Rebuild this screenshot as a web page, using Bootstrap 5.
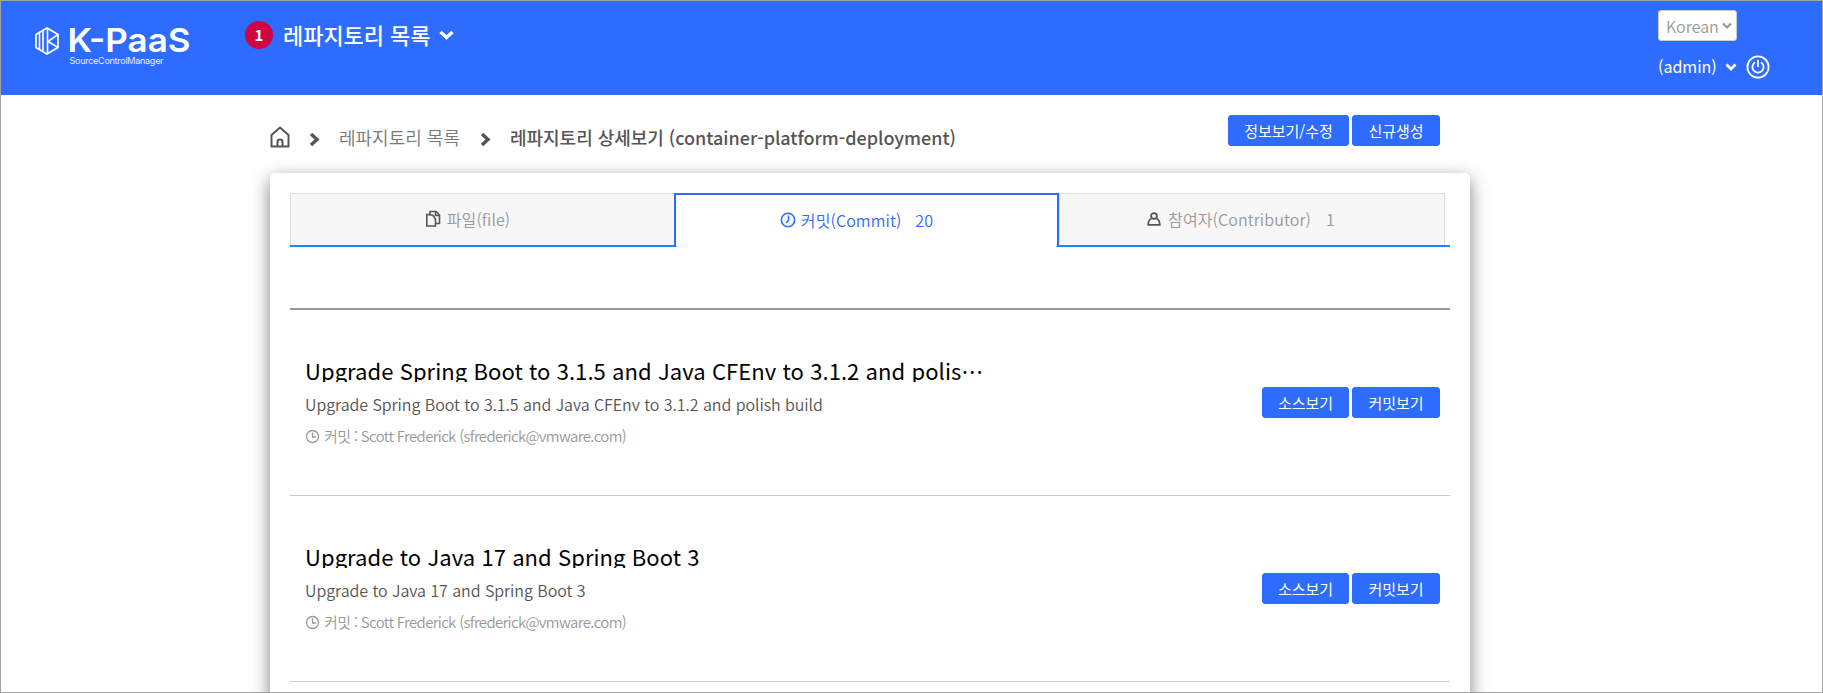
<!DOCTYPE html>
<html lang="ko">
<head>
<meta charset="utf-8">
<title>K-PaaS SourceControlManager</title>
<link href="https://cdn.jsdelivr.net/npm/bootstrap@5.3.0/dist/css/bootstrap.min.css" rel="stylesheet">
<style>
body{font-family:"Noto Sans CJK KR",sans-serif;height:693px;overflow:hidden;background:#fff;color:#555}
.frame{height:693px;border:1px solid #a3a3a3;overflow:hidden}
.topbar{height:94px;background:#2e6bff;color:#fff}
.brand-logo{margin:20px 0 0 29px;overflow:visible}
.step{width:28px;height:28px;background:#cf0440;font-size:15px;font-weight:700;line-height:27px}
.menu-area{margin:20px 0 0 50px;height:28px}
.menu-title{font-size:22px;font-weight:500;line-height:28px;margin:-2px 0 0 10px;letter-spacing:-.05px}
.user-area{margin:9px 49px 0 auto;width:115px}
.lang{width:79px;height:31px;border:1px solid #ccc;border-radius:3px;color:#999;font-size:16px;font-weight:350;padding:0 4px 0 7px}
.admin-row{height:24px;margin-top:14px;font-size:16px}
.admin-row span{margin-top:-2px}
.admin-row svg{position:relative;left:-1px}
.wrap{width:1200px;margin-left:269px}
.crumbs{height:78px}
.crumb-row{font-size:18px;line-height:26px;padding-top:29px;color:#555}
.crumb-row svg{flex:none}
.crumb-row .here{font-weight:500;margin-left:18px;letter-spacing:-.02px}
.crumb-row .parent{margin-left:18px;color:#777;font-weight:350}
.actions{padding:20px 30px 0 0}
.btn-blue{--bs-btn-bg:#2e6bff;--bs-btn-color:#fff;--bs-btn-border-color:#2e6bff;height:31px;padding:0;font-size:15px;line-height:28px;font-weight:400;border-radius:3px;width:88px}
.btn-blue.wide{width:121px}
.btn-blue.src{width:87px}
.panel{height:640px;border-radius:5px;background:#fff;box-shadow:0 6px 18px rgba(0,0,0,.5);padding:20px 20px 0}
.tabs{height:54px;background:linear-gradient(#1e87f7,#1e87f7) bottom/100% 2px no-repeat;padding-right:5px}
.tab{width:384px;height:52px;background:#f7f7f7;border:1px solid #ddd;border-bottom:0;border-right:0;font-size:16px;color:#999;padding:0 22px 2px 0}
.tab:last-child{width:386px;border-right:1px solid #ddd}
.tab.on{width:385px;height:54px;background:#fff;border:2px solid #2e6bff;border-bottom:0;color:#2e6bff;border-radius:0 0 3px 3px;padding-right:20px}
.tab.first{padding-right:30px}
.tab span{font-weight:350;letter-spacing:.1px}
.rule{height:63px;border-bottom:2px solid #999}
.commit{height:186px;border-bottom:1px solid #ccc;padding:48px 10px 0 15px}
.c-title{font-size:22px;line-height:24px;height:24px;overflow:hidden;color:#000;white-space:nowrap;letter-spacing:.064px}
.c-desc{font-size:16px;line-height:24px;color:#555;margin-top:10px;font-weight:350;letter-spacing:-.06px}
.c-meta{font-size:15px;line-height:22px;color:#999;margin-top:9px;font-weight:350;letter-spacing:-.64px}
</style>
</head>
<body>
<div class="frame">
<header class="topbar d-flex align-items-start">
  <svg class="brand-logo" width="165" height="52" viewBox="30 21 165 52" fill="none">
    <path d="M47 28 58 34.5V47.500L47 54 36 47.500V34.500Z" stroke="#fff" stroke-width="1.700"/>
    <path d="M39.500 33V49M43 31V51M47.500 28V54M58 34.500 48 41.500 58 47.500" stroke="#fff" stroke-width="1.600"/>
    <text x="67.500" y="52" font-family="Inter" font-weight="600" font-size="33" fill="#fff" textLength="123" lengthAdjust="spacingAndGlyphs">K-PaaS</text>
    <text x="69.500" y="63.500" font-family="Inter" font-size="9" fill="#e8efff" textLength="94">SourceControlManager</text>
  </svg>
  <div class="menu-area d-flex align-items-center">
    <span class="step rounded-circle text-center">1</span>
    <span class="menu-title">레파지토리 목록</span>
    <svg class="ms-2" width="17" height="12" viewBox="0 0 17 12"><path d="M2.500 3 8.500 8.500 14.500 3" fill="none" stroke="#fff" stroke-width="3.500"/></svg>
  </div>
  <div class="user-area">
    <div class="lang bg-white d-flex align-items-center justify-content-between"><span>Korean</span>
      <svg width="10" height="8" viewBox="0 0 10 8"><path d="M1 1.500 5 5.500 9 1.500" fill="none" stroke="#999" stroke-width="2.200"/></svg></div>
    <div class="admin-row d-flex align-items-center"><span>(admin)</span>
      <svg style="margin-left:9px" width="12" height="9" viewBox="0 0 12 9"><path d="M1.500 1.500 6 6 10.500 1.500" fill="none" stroke="#fff" stroke-width="2.800"/></svg>
      <svg style="margin-left:9px" width="24" height="24" viewBox="0 0 24 24" fill="none" stroke="#fff" stroke-width="1.800"><circle cx="12" cy="12" r="10.600"/><path d="M9 7.200A5.600 5.600 0 1 0 15 7.200M12 5V12"/></svg>
    </div>
  </div>
</header>
<main class="wrap">
  <div class="crumbs d-flex justify-content-between">
    <div class="crumb-row d-flex align-items-start">
      <svg style="margin-top:2px" width="20" height="22" viewBox="0 0 20 22" fill="none" stroke="#555" stroke-width="2"><path d="M1.500 9 10 1.500 18.500 9V20.500H1.500ZM7.500 20V15.500Q7.500 13.500 10 13.500T12.500 15.500V20"/></svg>
      <svg style="margin:8px 0 0 19px" width="12" height="15" viewBox="0 0 12 15"><path d="M2 2 8 7.500 2 13" fill="none" stroke="#555" stroke-width="3.400"/></svg>
      <span class="parent">레파지토리 목록</span>
      <svg style="margin:8px 0 0 20px" width="12" height="15" viewBox="0 0 12 15"><path d="M2 2 8 7.500 2 13" fill="none" stroke="#555" stroke-width="3.400"/></svg>
      <span class="here">레파지토리 상세보기 (container-platform-deployment)</span>
    </div>
    <div class="actions d-flex align-items-start"><button class="btn btn-blue wide">정보보기/수정</button><button class="btn btn-blue" style="margin-left:3px">신규생성</button></div>
  </div>
  <section class="panel">
    <div class="tabs d-flex">
      <div class="tab first d-flex align-items-center justify-content-center">
        <svg style="margin-right:6px" width="16" height="18" viewBox="0 0 16 18" fill="none" stroke="#555" stroke-width="1.600"><path d="M5 4.500H1.800V16H10.500V13.500M5 1.500H11L14.500 5V13.500H10.500V9L7.500 5H5ZM10.500 1.500V5.500H14.500"/></svg><span>파일(file)</span></div>
      <div class="tab on d-flex align-items-center justify-content-center">
        <svg style="margin-right:5px" width="16" height="16" viewBox="0 0 16 16" fill="none" stroke="#2e6bff" stroke-width="1.600"><circle cx="8" cy="8" r="6.700"/><path d="M8.500 3.500V8.500L6 11"/></svg><span>커밋(Commit)</span><span style="margin-left:14px">20</span></div>
      <div class="tab d-flex align-items-center justify-content-center">
        <svg style="margin-right:7px" width="14" height="14" viewBox="0 0 14 14" fill="none" stroke="#555" stroke-width="1.800"><circle cx="7" cy="4" r="2.900"/><path d="M4.500 6.500Q1.200 8 1.200 12.800H12.800Q12.800 8 9.500 6.500"/></svg><span>참여자(Contributor)</span><span style="margin-left:15px">1</span></div>
    </div>
    <div class="rule"></div>
    <article class="commit d-flex justify-content-between">
      <div><div class="c-title">Upgrade Spring Boot to 3.1.5 and Java CFEnv to 3.1.2 and polis…</div>
      <div class="c-desc">Upgrade Spring Boot to 3.1.5 and Java CFEnv to 3.1.2 and polish build</div>
      <div class="c-meta d-flex align-items-center"><svg style="margin-right:4px" width="15" height="15" viewBox="0 0 15 15" fill="none" stroke="#999" stroke-width="1.300"><circle cx="7.500" cy="7.500" r="6"/><path d="M7.500 3.500V8H11"/></svg><span>커밋 : Scott Frederick (sfrederick@vmware.com)</span></div></div>
      <div class="d-flex" style="padding-top:29px"><button class="btn btn-blue src">소스보기</button><button class="btn btn-blue" style="margin-left:3px">커밋보기</button></div>
    </article>
    <article class="commit d-flex justify-content-between">
      <div><div class="c-title">Upgrade to Java 17 and Spring Boot 3</div>
      <div class="c-desc">Upgrade to Java 17 and Spring Boot 3</div>
      <div class="c-meta d-flex align-items-center"><svg style="margin-right:4px" width="15" height="15" viewBox="0 0 15 15" fill="none" stroke="#999" stroke-width="1.300"><circle cx="7.500" cy="7.500" r="6"/><path d="M7.500 3.500V8H11"/></svg><span>커밋 : Scott Frederick (sfrederick@vmware.com)</span></div></div>
      <div class="d-flex" style="padding-top:29px"><button class="btn btn-blue src">소스보기</button><button class="btn btn-blue" style="margin-left:3px">커밋보기</button></div>
    </article>
  </section>
</main>
</div>
<script src="https://cdn.jsdelivr.net/npm/bootstrap@5.3.0/dist/js/bootstrap.bundle.min.js"></script>
</body>
</html>
